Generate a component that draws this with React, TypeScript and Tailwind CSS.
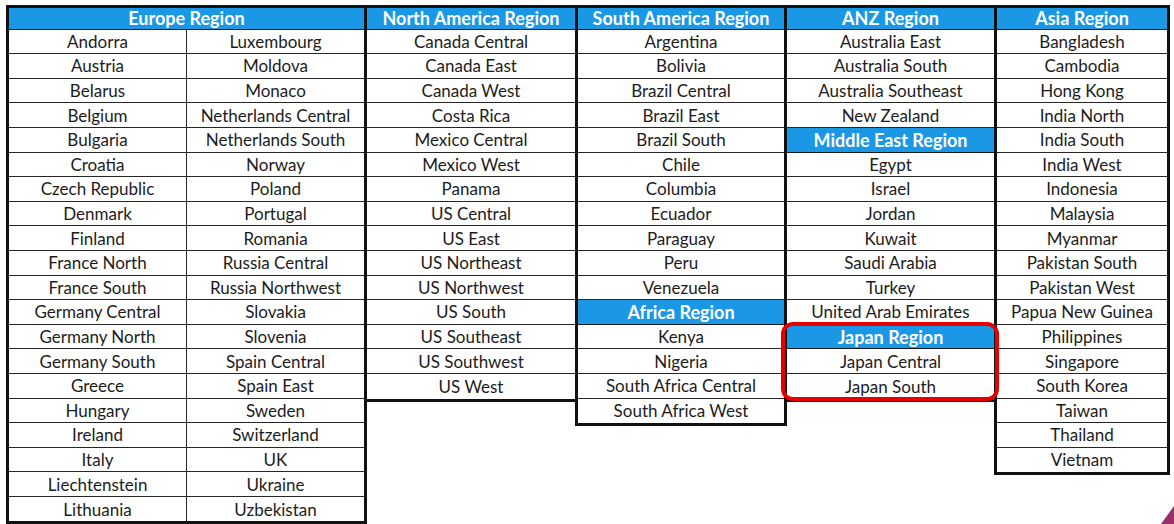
const europeLeft = [
  'Andorra', 'Austria', 'Belarus', 'Belgium', 'Bulgaria', 'Croatia', 'Czech Republic', 'Denmark', 'Finland', 'France North',
  'France South', 'Germany Central', 'Germany North', 'Germany South', 'Greece', 'Hungary', 'Ireland', 'Italy', 'Liechtenstein', 'Lithuania',
];
const europeRight = [
  'Luxembourg', 'Moldova', 'Monaco', 'Netherlands Central', 'Netherlands South', 'Norway', 'Poland', 'Portugal', 'Romania', 'Russia Central',
  'Russia Northwest', 'Slovakia', 'Slovenia', 'Spain Central', 'Spain East', 'Sweden', 'Switzerland', 'UK', 'Ukraine', 'Uzbekistan',
];

type Row = { text: string; head?: boolean };

const h = (text: string): Row => ({ text, head: true });
const r = (...items: string[]): Row[] => items.map(text => ({ text }));

const northAmerica: Row[] = [
  h('North America Region'),
  ...r('Canada Central', 'Canada East', 'Canada West', 'Costa Rica', 'Mexico Central', 'Mexico West', 'Panama', 'US Central', 'US East',
    'US Northeast', 'US Northwest', 'US South', 'US Southeast', 'US Southwest', 'US West'),
];

const southAmerica: Row[] = [
  h('South America Region'),
  ...r('Argentina', 'Bolivia', 'Brazil Central', 'Brazil East', 'Brazil South', 'Chile', 'Columbia', 'Ecuador', 'Paraguay', 'Peru', 'Venezuela'),
  h('Africa Region'),
  ...r('Kenya', 'Nigeria', 'South Africa Central', 'South Africa West'),
];

const anz: Row[] = [
  h('ANZ Region'),
  ...r('Australia East', 'Australia South', 'Australia Southeast', 'New Zealand'),
  h('Middle East Region'),
  ...r('Egypt', 'Israel', 'Jordan', 'Kuwait', 'Saudi Arabia', 'Turkey', 'United Arab Emirates'),
  h('Japan Region'),
  ...r('Japan Central', 'Japan South'),
];

const asia: Row[] = [
  h('Asia Region'),
  ...r('Bangladesh', 'Cambodia', 'Hong Kong', 'India North', 'India South', 'India West', 'Indonesia', 'Malaysia', 'Myanmar',
    'Pakistan South', 'Pakistan West', 'Papua New Guinea', 'Philippines', 'Singapore', 'South Korea', 'Taiwan', 'Thailand', 'Vietnam'),
];

// first row sits under the 3px top border, so it is shorter
const headCls = 'flex items-center justify-center bg-[#1a98e6] text-white font-bold text-[18px] leading-none border-b-[1.5px] border-[#1a1a1a]';
const cellCls = 'flex items-center justify-center h-[24.6px] text-[17px] leading-none text-[#1c1c1c] border-[#262626]';

function Cell({ row, first, last }: { row: Row; first: boolean; last: boolean }) {
  if (row.head) {
    return <div className={`${headCls} ${first ? 'h-[21.6px]' : 'h-[24.6px]'}`}>{row.text}</div>;
  }
  return <div className={`${cellCls} ${last ? '' : 'border-b-[1.5px]'}`}>{row.text}</div>;
}

// columns overlap by one border width so neighbours share a single line
function RegionColumn({ rows, width }: { rows: Row[]; width: string }) {
  return (
    <div className={`${width} -ml-[3px] flex flex-col self-start border-[3px] border-[#111]`}>
      {rows.map((row, i) => (
        <Cell key={i} row={row} first={i === 0} last={i === rows.length - 1} />
      ))}
    </div>
  );
}

export default function App() {
  return (
    <div className="relative w-[1174px] h-[524px] bg-white overflow-hidden font-['Lato',sans-serif]">
      <div className="flex pt-[5px] pl-[6px]">
        {/* Europe, two sub columns */}
        <div className="w-[361px] flex flex-col self-start border-[3px] border-[#111]">
          <div className={`${headCls} h-[21.6px]`}>Europe Region</div>
          <div className="grid grid-cols-[178px_1fr]">
            {europeLeft.map((left, i) => {
              const last = i === europeLeft.length - 1;
              return [
                <div key={`l${i}`} className={`${cellCls} border-r-[1.5px] ${last ? '' : 'border-b-[1.5px]'}`}>
                  {left}
                </div>,
                <div key={`r${i}`} className={`${cellCls} ${last ? '' : 'border-b-[1.5px]'}`}>
                  {europeRight[i]}
                </div>,
              ];
            })}
          </div>
        </div>
        <RegionColumn rows={northAmerica} width="w-[214px]" />
        <RegionColumn rows={southAmerica} width="w-[212px]" />
        <RegionColumn rows={anz} width="w-[213px]" />
        <RegionColumn rows={asia} width="w-[176px]" />
      </div>

      {/* highlight around Japan */}
      <div className="absolute left-[781px] top-[322px] w-[218px] h-[79px] border-4 border-[#e60000] rounded-[12px]" />

      {/* slide corner accent */}
      <svg className="absolute right-0 bottom-0" width="14" height="18" viewBox="0 0 14 18">
        <polygon points="1,18 14,0 14,18" fill="#9c2f6b" />
      </svg>
    </div>
  );
}
